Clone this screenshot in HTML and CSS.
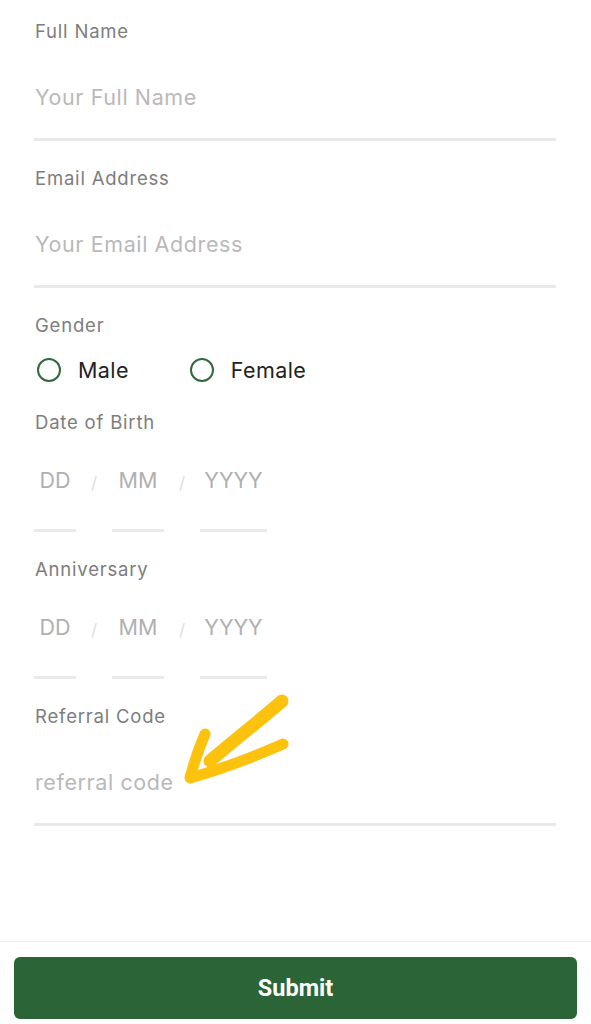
FILE: index.html
```html
<!doctype html>
<html lang="en">
<head>
	<meta charset="UTF-8">
	<title>Profile</title>
	<link rel="stylesheet" href="styles.css">
</head>
<body>
	<div class="page">
		<form class="form">
			<div class="field">
				<div class="label">Full Name</div>
				<div class="input">Your Full Name</div>
			</div>
			<div class="field">
				<div class="label">Email Address</div>
				<div class="input">Your Email Address</div>
			</div>
			<div class="field field-gender">
				<div class="label">Gender</div>
				<div class="radios">
					<div class="radio"><span class="dot"></span>Male</div>
					<div class="radio"><span class="dot"></span>Female</div>
				</div>
			</div>
			<div class="field">
				<div class="label">Date of Birth</div>
				<div class="date">
					<div class="seg seg-d">DD</div>
					<div class="slash">/</div>
					<div class="seg seg-m">MM</div>
					<div class="slash">/</div>
					<div class="seg seg-y">YYYY</div>
				</div>
			</div>
			<div class="field">
				<div class="label">Anniversary</div>
				<div class="date">
					<div class="seg seg-d">DD</div>
					<div class="slash">/</div>
					<div class="seg seg-m">MM</div>
					<div class="slash">/</div>
					<div class="seg seg-y">YYYY</div>
				</div>
			</div>
			<div class="field field-ref">
				<div class="label">Referral Code</div>
				<div class="input">referral code</div>
				<!-- hand drawn arrow pointing at the field -->
				<svg class="arrow" width="120" height="110" viewBox="0 0 120 110">
					<path d="M103 15 C80 35 58 52 31 75" fill="none" stroke="#fcc20e" stroke-width="13" stroke-linecap="round"/>
					<path d="M26 48 C20 62 15 76 11 92 C40 84 72 72 104 58" fill="none" stroke="#fcc20e" stroke-width="11" stroke-linecap="round" stroke-linejoin="round"/>
				</svg>
			</div>
		</form>
		<div class="footer">
			<button class="submit" type="button">Submit</button>
		</div>
	</div>
</body>
</html>
```
FILE: styles.css
```css
*{
	margin: 0;
	padding: 0;
	box-sizing: border-box;
}
body{
	background: #fff;
	font-family: Inter, "Noto Sans", sans-serif;
}
.page{
	height: 100vh;
	display: flex;
	flex-direction: column;
}
.form{
	flex: 1;
	padding: 19px 35px 0 34px;
}
.field{
	margin-bottom: 25px;
	position: relative;
}
.label{
	height: 24px;
	line-height: 24px;
	font-size: 18.5px;
	letter-spacing: 0.8px;
	color: #7d7d7d;
	padding-left: 1px;
}
.input{
	margin-top: 26px;
	height: 72px;
	padding: 0 1px 13px;
	line-height: 56px;
	font-size: 21.5px;
	letter-spacing: 0.6px;
	color: #b9b9b9;
	border-bottom: 3px solid #e9e9e9;
}
.radios{
	margin-top: 18px;
	height: 30px;
	display: flex;
	align-items: center;
	gap: 58px;
	font-size: 21.5px;
	letter-spacing: 0.4px;
	color: #222;
}
.radio{
	display: flex;
	align-items: center;
	gap: 17px;
	padding-left: 3px;
}
.dot{
	width: 24px;
	height: 24px;
	border-radius: 50%;
	border: 2.5px solid #2e6a3b;
}
.date{
	margin-top: 25px;
	display: flex;
	font-size: 21.5px;
	color: #b0b0b0;
	line-height: 42px;
}
.seg{
	height: 73px;
	padding-bottom: 28px;
	text-align: center;
	border-bottom: 3px solid #e9e9e9;
}
.seg-d{
	width: 42px;
}
.seg-m{
	width: 52px;
}
.seg-y{
	width: 67px;
}
.slash{
	width: 36px;
	text-align: center;
	color: #dedede;
	font-size: 17px;
	padding-top: 3px;
}
.arrow{
	position: absolute;
	left: 145px;
	top: -18px;
}
.footer{
	border-top: 1px solid #eeeeee;
	padding: 15px 14px 5px;
}
.submit{
	width: 100%;
	height: 62px;
	border: 0;
	border-radius: 6px;
	background: #2b6436;
	color: #fff;
	font-family: Roboto, "Noto Sans", sans-serif;
	font-weight: bold;
	font-size: 23.5px;
}
```
